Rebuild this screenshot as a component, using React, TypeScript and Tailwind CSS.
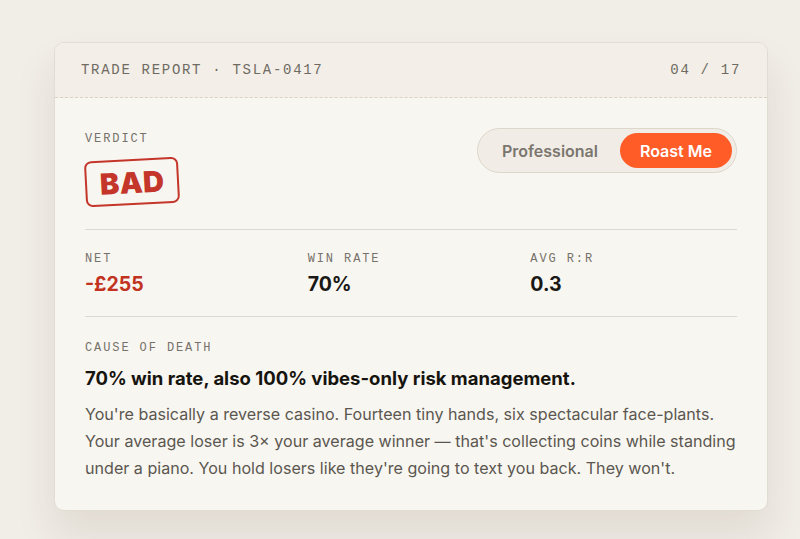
const mono = { fontFamily: "'Liberation Mono', 'DejaVu Sans Mono', monospace" };
const sans = { fontFamily: "Inter, 'Noto Sans', sans-serif" };

const stats = [
  { label: 'NET', value: '-£255', tone: 'text-[#c2331f]' },
  { label: 'WIN RATE', value: '70%', tone: 'text-[#1a1815]' },
  { label: 'AVG R:R', value: '0.3', tone: 'text-[#1a1815]' },
];

export default function App() {
  return (
    <div className="min-h-[539px] w-[800px] bg-[#f1ede7] pt-[42px] overflow-hidden" style={sans}>
      <div className="ml-[54px] w-[714px] rounded-[10px] border border-[#e2ddd2] bg-[#f8f6f1] shadow-[0_24px_40px_rgba(80,60,30,0.10)] overflow-hidden">
        {/* Header */}
        <div
          className="h-[55px] px-[26px] flex items-center justify-between bg-[#f3efe8] border-b border-dashed border-[#d9d2c5] text-[14px] tracking-[1.7px] text-[#6f6a62]"
          style={mono}
        >
          <span>TRADE REPORT · TSLA-0417</span>
          <span>04 / 17</span>
        </div>

        <div className="px-[30px] pt-[30px] pb-[28px]">
          {/* Verdict + toggle */}
          <div className="flex items-start justify-between pb-[24px] border-b border-[#dedad1]">
            <div className="pt-[3px]">
              <div className="text-[12px] leading-[16px] tracking-[1.9px] text-[#76716a]" style={mono}>
                VERDICT
              </div>
              <div className="mt-[12px] inline-flex items-center h-[46px] px-[13px] rounded-[7px] border-2 border-[#c4352a] -rotate-3">
                <span className="text-[29px] leading-none font-black text-[#c4352a] tracking-[0.01em]">BAD</span>
              </div>
            </div>
            <div className="flex items-center h-[45px] rounded-full border border-[#ddd6ca] bg-[#f1ede6] pl-[24px] pr-[4px] gap-[22px]">
              <span className="text-[16px] font-semibold text-[#7b766e]">Professional</span>
              <span className="h-[35px] px-[20px] flex items-center rounded-full bg-[#ff5c28] text-white text-[16px] font-semibold">
                Roast Me
              </span>
            </div>
          </div>

          {/* Stats */}
          <div className="grid grid-cols-3 gap-4 pt-[21px] pb-[19px] border-b border-[#dedad1]">
            {stats.map((s) => (
              <div key={s.label}>
                <div className="text-[12px] leading-[16px] tracking-[1.9px] text-[#76716a]" style={mono}>
                  {s.label}
                </div>
                <div className={`mt-[4px] text-[19.5px] leading-[26px] font-bold ${s.tone}`}>{s.value}</div>
              </div>
            ))}
          </div>

          {/* Cause of death */}
          <div className="pt-[23px]">
            <div className="text-[12px] leading-[16px] tracking-[1.9px] text-[#76716a]" style={mono}>
              CAUSE OF DEATH
            </div>
            <h3 className="mt-[9px] text-[18.5px] leading-[26px] font-bold text-[#16140f]">
              70% win rate, also 100% vibes-only risk management.
            </h3>
            <p className="mt-[10px] -mr-[6px] text-[16.1px] leading-[27px] text-[#5b5750]">
              You're basically a reverse casino. Fourteen tiny hands, six spectacular face-plants. Your average loser is 3× your average winner — that's collecting coins while standing under a piano. You hold losers like they're going to text you back. They won't.
            </p>
          </div>
        </div>
      </div>
    </div>
  );
}
